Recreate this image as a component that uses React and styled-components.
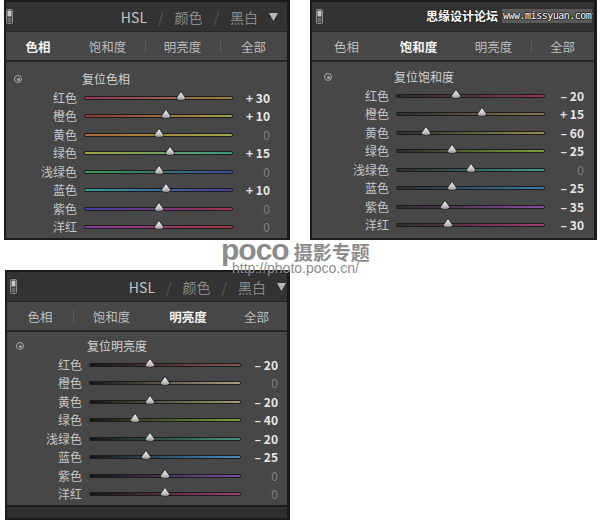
import React from "react";
import styled, { createGlobalStyle } from "styled-components";

const GlobalStyle = createGlobalStyle`
  html, body { margin: 0; padding: 0; background: #ffffff; }
  body {
    width: 600px;
    height: 526px;
    overflow: hidden;
    font-family: "Noto Sans CJK SC", "Noto Sans", sans-serif;
  }
`;

const Page = styled.div`
  position: relative;
  width: 600px;
  height: 526px;
  box-sizing: border-box;
  padding-left: 4px;
  display: grid;
  grid-template-columns: 286px 287px;
  grid-template-rows: 240px 250px;
  column-gap: 20px;
  row-gap: 30px;
  align-items: start;
`;

const Frame = styled.section`
  width: ${(p) => p.$w}px;
  height: 100%;
  justify-self: end;
  box-sizing: border-box;
  display: flex;
  flex-direction: column;
  background: #474747;
  border: 2px solid #1c1c1c;
  border-right-width: 3px;
  overflow: hidden;
`;

const Header = styled.header`
  flex: none;
  height: 29px;
  display: flex;
  align-items: center;
  background: #333333;
  padding: 0 ${(p) => p.$padR}px 0 ${(p) => p.$padL}px;
`;

const Title = styled.div`
  margin-left: auto;
  display: flex;
  align-items: center;
  gap: 11px;
  font-size: 14px;
  line-height: 1;
`;

const TitleItem = styled.span`
  color: ${(p) => (p.$on ? "#c4c4c4" : "#8a8a8a")};
`;

const Slash = styled.span`
  color: #5c5c5c;
`;

const TabBar = styled.nav`
  flex: none;
  height: 28px;
  display: grid;
  grid-template-columns: ${(p) => p.$cols};
  background: #474747;
  border-top: 1px solid #262626;
  border-bottom: 2px solid #262626;
`;

const Tab = styled.div`
  position: relative;
  display: flex;
  align-items: center;
  justify-content: center;
  font-size: 12.5px;
  color: ${(p) => (p.$active ? "#f4f4f4" : "#bdbdbd")};
  font-weight: ${(p) => (p.$active ? 700 : 400)};

  & + &::before {
    content: "";
    position: absolute;
    left: 0;
    top: 8px;
    width: 1px;
    height: 13px;
    background: #5a5a5a;
  }
`;

const Body = styled.div`
  flex: 1;
  display: flex;
  flex-direction: column;
  padding-top: ${(p) => p.$padTop}px;
  background: #474747;
`;

const Row = styled.div`
  display: grid;
  grid-template-columns: ${(p) => p.$lead}px ${(p) => p.$track}px 1fr;
  column-gap: 8px;
  align-items: center;
  height: 18.5px;
  padding-right: ${(p) => p.$padR}px;
`;

const Label = styled.span`
  text-align: right;
  font-size: 12px;
  line-height: 1;
  color: #c6c6c6;
  white-space: nowrap;
`;

const ResetText = styled.span`
  margin-left: -3px;
  font-size: 12px;
  line-height: 1;
  color: #d2d2d2;
  white-space: nowrap;
`;

const ResetIcon = styled.span`
  justify-self: start;
  margin-left: ${(p) => p.$left}px;
  position: relative;
  width: 6px;
  height: 6px;
  border: 1.5px solid #a9a9a9;
  border-radius: 50%;

  &::after {
    content: "";
    position: absolute;
    left: 1.5px;
    top: 1.5px;
    width: 3px;
    height: 3px;
    border-radius: 50%;
    background: #a9a9a9;
  }
`;

const Value = styled.span`
  text-align: right;
  font-size: 12px;
  line-height: 1;
  white-space: pre;
  font-weight: ${(p) => (p.$zero ? 400 : 700)};
  color: ${(p) => (p.$zero ? "#7f7f7f" : "#e8e8e8")};
`;

const Track = styled.div`
  position: relative;
  height: 2px;
  border-radius: 2px;
  background: linear-gradient(90deg, ${(p) => p.$from}, ${(p) => p.$to});
  box-shadow: 0 0 0 1px #1c1c1c;
`;

const Thumb = styled.svg`
  position: absolute;
  left: ${(p) => p.$pos}%;
  top: -6px;
  width: 11px;
  height: 10px;
  transform: translateX(-50%);
  overflow: visible;
`;

const Footer = styled.footer`
  flex: none;
  height: 11px;
  background: #2f2f2f;
  border-top: 2px solid #1c1c1c;
`;

const CollapseIcon = styled.svg`
  flex: none;
  width: 7px;
  height: 15px;
`;

const Caret = styled.svg`
  flex: none;
  width: 9px;
  height: 8px;
`;

const SiteStamp = styled.div`
  position: absolute;
  left: 424px;
  top: 8px;
  display: flex;
  align-items: center;
  gap: 4px;
  padding: 0 2px;
  color: #ffffff;
  text-shadow: -1px 0 #1b1b1b, 1px 0 #1b1b1b, 0 -1px #1b1b1b, 0 1px #1b1b1b;
`;

const SiteName = styled.span`
  font-size: 12px;
  font-weight: 700;
  line-height: 16px;
`;

const SiteUrl = styled.span`
  font-family: "DejaVu Sans Mono", monospace;
  font-size: 10px;
  line-height: 14px;
  letter-spacing: -0.5px;
  background: #5a5a5a;
  padding: 0 1px;
`;

const PocoStamp = styled.div`
  position: absolute;
  left: 221px;
  top: 240px;
  display: flex;
  flex-direction: column;
  color: #8c8c8c;
  pointer-events: none;
`;

const PocoLine = styled.div`
  display: flex;
  align-items: baseline;
  gap: 5px;
  height: 20px;
`;

const PocoMark = styled.span`
  font-family: "Liberation Sans", Arial, sans-serif;
  font-size: 30px;
  font-weight: 700;
  line-height: 20px;
  letter-spacing: -1px;
`;

const PocoTitle = styled.span`
  font-size: 19px;
  font-weight: 700;
  line-height: 20px;
`;

const PocoUrl = styled.span`
  margin-left: 11px;
  margin-top: 2px;
  font-family: "Liberation Sans", Arial, sans-serif;
  font-size: 14px;
  line-height: 12px;
`;

const TABS = ["色相", "饱和度", "明亮度", "全部"];

const panels = [
  {
    id: "hue",
    active: 0,
    reset: "复位色相",
    w: 286,
    geo: { lead: 71, track: 147, padR: 17, cols: "64px 75px 75px 1fr", padTop: 8, headL: 0, headR: 9, iconL: 8 },
    rows: [
      ["红色", 30, "#95345a", "#9c853e"],
      ["橙色", 10, "#8c3538", "#a3a24a"],
      ["黄色", 0, "#a8683c", "#a2aa48"],
      ["绿色", 15, "#a6a444", "#3a9c86"],
      ["浅绿色", 0, "#3c9c4c", "#34509e"],
      ["蓝色", 10, "#2f9e96", "#4a3aa0"],
      ["紫色", 0, "#3e3ea8", "#a8344e"],
      ["洋红", 0, "#8a3ea2", "#a8343e"],
    ],
  },
  {
    id: "sat",
    active: 1,
    reset: "复位饱和度",
    w: 287,
    stamped: true,
    geo: { lead: 77, track: 147, padR: 10, cols: "69px 75px 75px 1fr", padTop: 6, headL: 4, headR: 1, iconL: 12 },
    rows: [
      ["红色", -20, "#2c2c2c", "#8e3a4a"],
      ["橙色", 15, "#2c2c2c", "#8e7552"],
      ["黄色", -60, "#2c2c2c", "#93904e"],
      ["绿色", -25, "#2c2c2c", "#7ca23c"],
      ["浅绿色", 0, "#2c2c2c", "#3f9a96"],
      ["蓝色", -25, "#2c2c2c", "#3c7ea6"],
      ["紫色", -35, "#2c2c2c", "#8c4c9c"],
      ["洋红", -30, "#2c2c2c", "#a43c72"],
    ],
  },
  {
    id: "lum",
    active: 2,
    reset: "复位明亮度",
    w: 285,
    footer: true,
    geo: { lead: 75, track: 150, padR: 9, cols: "66px 77px 76px 1fr", padTop: 5, headL: 3, headR: 1, iconL: 9 },
    rows: [
      ["红色", -20, "#161616", "#8c5656"],
      ["橙色", 0, "#161616", "#aea084"],
      ["黄色", -20, "#161616", "#a2a06e"],
      ["绿色", -40, "#161616", "#7ea040"],
      ["浅绿色", -20, "#161616", "#4a9282"],
      ["蓝色", -25, "#161616", "#4a8ec0"],
      ["紫色", 0, "#161616", "#7e4ea2"],
      ["洋红", 0, "#161616", "#a04270"],
    ],
  },
];

const formatValue = (v) => (v > 0 ? `+ ${v}` : v < 0 ? `– ${-v}` : "0");

function SliderThumb({ pos }) {
  return (
    <Thumb $pos={pos} viewBox="0 0 11 10">
      <defs>
        <linearGradient id="thumbShade" x1="0" y1="0" x2="0" y2="1">
          <stop offset="0" stopColor="#f2f2f2" />
          <stop offset="0.6" stopColor="#c9c9c9" />
          <stop offset="1" stopColor="#8f8f8f" />
        </linearGradient>
      </defs>
      <path
        d="M5.5 0.4 L9.9 6.6 Q10.6 9.4 5.5 9.4 Q0.4 9.4 1.1 6.6 Z"
        fill="url(#thumbShade)"
        stroke="#202020"
        strokeWidth="0.8"
      />
    </Thumb>
  );
}

function Panel({ data }) {
  const { geo } = data;
  return (
    <Frame $w={data.w}>
      <Header $padL={geo.headL} $padR={geo.headR}>
        <CollapseIcon viewBox="0 0 7 15">
          <rect x="0.5" y="0.5" width="6" height="14" rx="1" fill="#2a2a2a" stroke="#8e8e8e" />
          <rect x="1.5" y="1.5" width="4" height="6" fill="#c8c8c8" />
          <rect x="1.5" y="8.5" width="4" height="5" fill="#6a6a6a" />
        </CollapseIcon>
        <Title>
          {!data.stamped && (
            <>
              <TitleItem $on>HSL</TitleItem>
              <Slash>/</Slash>
              <TitleItem>颜色</TitleItem>
              <Slash>/</Slash>
              <TitleItem>黑白</TitleItem>
            </>
          )}
          <Caret viewBox="0 0 9 8">
            <path d="M0 0 H9 L4.5 8 Z" fill="#b8b8b8" />
          </Caret>
        </Title>
      </Header>
      <TabBar $cols={geo.cols}>
        {TABS.map((t, i) => (
          <Tab key={t} $active={i === data.active}>
            {t}
          </Tab>
        ))}
      </TabBar>
      <Body $padTop={geo.padTop}>
        <Row $lead={geo.lead} $track={geo.track} $padR={geo.padR}>
          <ResetIcon $left={geo.iconL} />
          <ResetText>{data.reset}</ResetText>
        </Row>
        {data.rows.map(([name, v, from, to]) => (
          <Row key={name} $lead={geo.lead} $track={geo.track} $padR={geo.padR}>
            <Label>{name}</Label>
            <Track $from={from} $to={to}>
              <SliderThumb pos={(v + 100) / 2} />
            </Track>
            <Value $zero={v === 0}>{formatValue(v)}</Value>
          </Row>
        ))}
      </Body>
      {data.footer && <Footer />}
    </Frame>
  );
}

export default function App() {
  return (
    <>
      <GlobalStyle />
      <Page>
        {panels.map((p) => (
          <Panel key={p.id} data={p} />
        ))}
        <SiteStamp>
          <SiteName>思缘设计论坛</SiteName>
          <SiteUrl>www.missyuan.com</SiteUrl>
        </SiteStamp>
        <PocoStamp>
          <PocoLine>
            <PocoMark>poco</PocoMark>
            <PocoTitle>摄影专题</PocoTitle>
          </PocoLine>
          <PocoUrl>http://photo.poco.cn/</PocoUrl>
        </PocoStamp>
      </Page>
    </>
  );
}
